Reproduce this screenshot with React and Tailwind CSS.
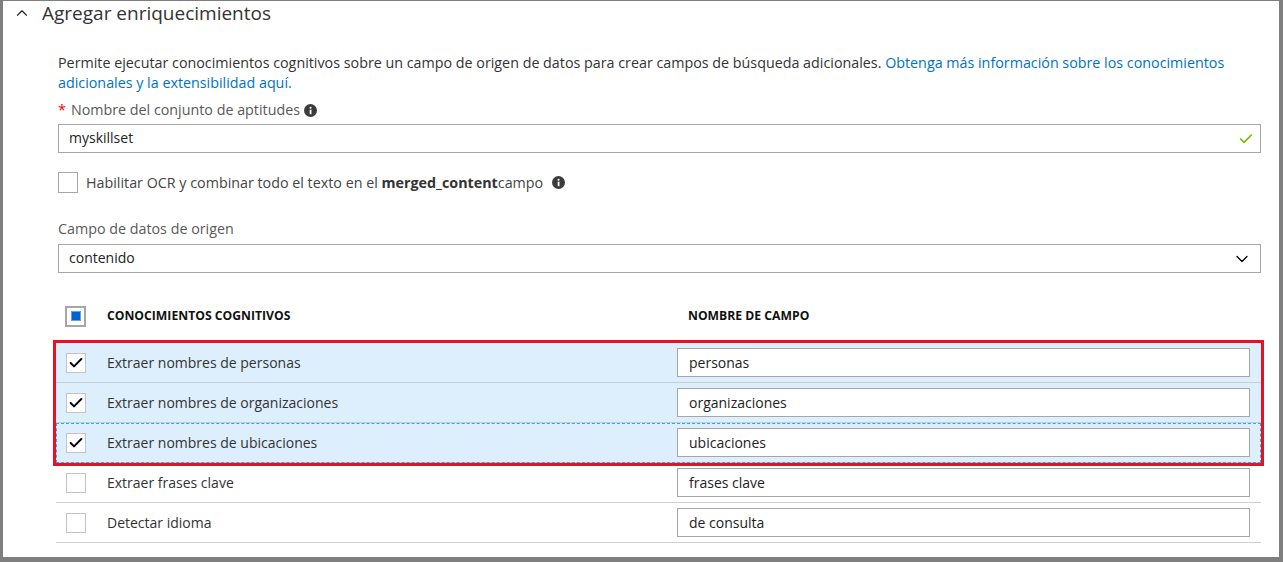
import { ChevronUp, ChevronDown, Check } from "lucide-react";

const rows = [
  { label: "Extraer nombres de personas", value: "personas", checked: true },
  { label: "Extraer nombres de organizaciones", value: "organizaciones", checked: true },
  { label: "Extraer nombres de ubicaciones", value: "ubicaciones", checked: true, focused: true },
  { label: "Extraer frases clave", value: "frases clave", checked: false },
  { label: "Detectar idioma", value: "de consulta", checked: false },
];

function InfoIcon() {
  return (
    <svg width="13" height="13" viewBox="0 0 16 16" className="inline-block">
      <circle cx="8" cy="8" r="8" fill="#3b3b3b" />
      <rect x="7" y="7" width="2.2" height="5.5" fill="#fff" />
      <circle cx="8.1" cy="4.6" r="1.3" fill="#fff" />
    </svg>
  );
}

function Box({ checked }) {
  return (
    <div className="w-[20px] h-[20px] border border-[#c4c4c4] bg-white flex items-center justify-center">
      {checked && <Check size={16} strokeWidth={3} className="text-black" />}
    </div>
  );
}

export default function App() {
  return (
    <div
      className="w-[1283px] h-[562px] bg-white border-t border-l-[3px] border-r-[4px] border-b-[5px] border-[#7f7f7f] text-[14px] text-[#333]"
      style={{ fontFamily: '"Segoe UI", "Open Sans", sans-serif' }}
    >
      <div className="flex items-center h-[24px] pl-[10px]">
        <ChevronUp size={18} strokeWidth={1.5} className="text-[#222]" />
        <span className="ml-[11px] text-[19px] text-[#333]">Agregar enriquecimientos</span>
      </div>

      <div className="pl-[55px] pr-[18px] pt-[28px]">
        <p className="leading-[20px] text-[14.3px]">
          Permite ejecutar conocimientos cognitivos sobre un campo de origen de datos para crear campos de búsqueda adicionales.{" "}
          <a className="text-[#0072c6]">Obtenga más información sobre los conocimientos adicionales y la extensibilidad aquí.</a>
        </p>

        <div className="mt-[7px] leading-[20px] text-[14.3px] flex items-center text-[#595959]">
          <span className="text-[#e00] mr-[5px]">*</span>
          <span>Nombre del conjunto de aptitudes</span>
          <span className="ml-[4px] flex"><InfoIcon /></span>
        </div>
        <div className="mt-[4px] h-[29px] border border-[#a6a6a6] flex items-center justify-between pl-[10px] pr-[6px]">
          <span className="text-[#222] leading-[20px] -mt-[2px]">myskillset</span>
          <Check size={16} strokeWidth={2.5} className="text-[#7fba00]" />
        </div>

        <div className="mt-[19px] flex items-center">
          <div className="w-[20px] h-[21px] border border-[#a6a6a6]" />
          <span className="ml-[8px] text-[#444] text-[14.3px]">
            Habilitar OCR y combinar todo el texto en el <b className="font-bold text-[#333]">merged_content</b>campo
          </span>
          <span className="ml-[9px] flex"><InfoIcon /></span>
        </div>

        <div className="mt-[26px] leading-[20px] text-[14.3px] text-[#595959]">Campo de datos de origen</div>
        <div className="mt-[5px] h-[29px] border border-[#a6a6a6] flex items-center justify-between pl-[10px] pr-[8px]">
          <span className="text-[#222] leading-[20px] -mt-[1px]">contenido</span>
          <ChevronDown size={20} strokeWidth={1.5} className="text-black" />
        </div>

        <div className="ml-[-2px] mt-[23px]">
          <div className="flex items-center h-[40px]">
            <div className="w-[51px] pl-[9px]">
              <div className="w-[21px] h-[21px] border-2 border-[#a6a6a6] flex items-center justify-center">
                <div className="w-[10px] h-[10px] bg-[#0063d3] border border-[#5fa3f0]" />
              </div>
            </div>
            <span className="w-[580px] text-[12.2px] font-bold text-[#111]">CONOCIMIENTOS COGNITIVOS</span>
            <span className="pl-[1px] text-[12.2px] font-bold text-[#111]">NOMBRE DE CAMPO</span>
          </div>

          <div className="relative mt-[7px]">
            {rows.map((r) => (
              <div
                key={r.label}
                className={
                  "flex items-center h-[40px] border-b " +
                  (r.checked ? "bg-[#ddeefc] border-[#c6cdd6] " : "bg-white border-[#cfcfcf] ") +
                  (r.focused ? "outline outline-1 outline-dashed outline-[#1eb1e8] -outline-offset-1" : "")
                }
              >
                <div className="w-[51px] pl-[10px]">
                  <Box checked={r.checked} />
                </div>
                <span className="w-[570px] text-[#333]">{r.label}</span>
                <div className="flex-1 mr-[11px] h-[29px] border border-[#a6a6a6] bg-white flex items-center px-[11px] text-[#222]">
                  {r.value}
                </div>
              </div>
            ))}
            <div className="absolute left-[-3px] right-[-3px] top-[-3px] h-[126px] border-[3px] border-[#e81123] pointer-events-none" />
          </div>
        </div>
      </div>
    </div>
  );
}
